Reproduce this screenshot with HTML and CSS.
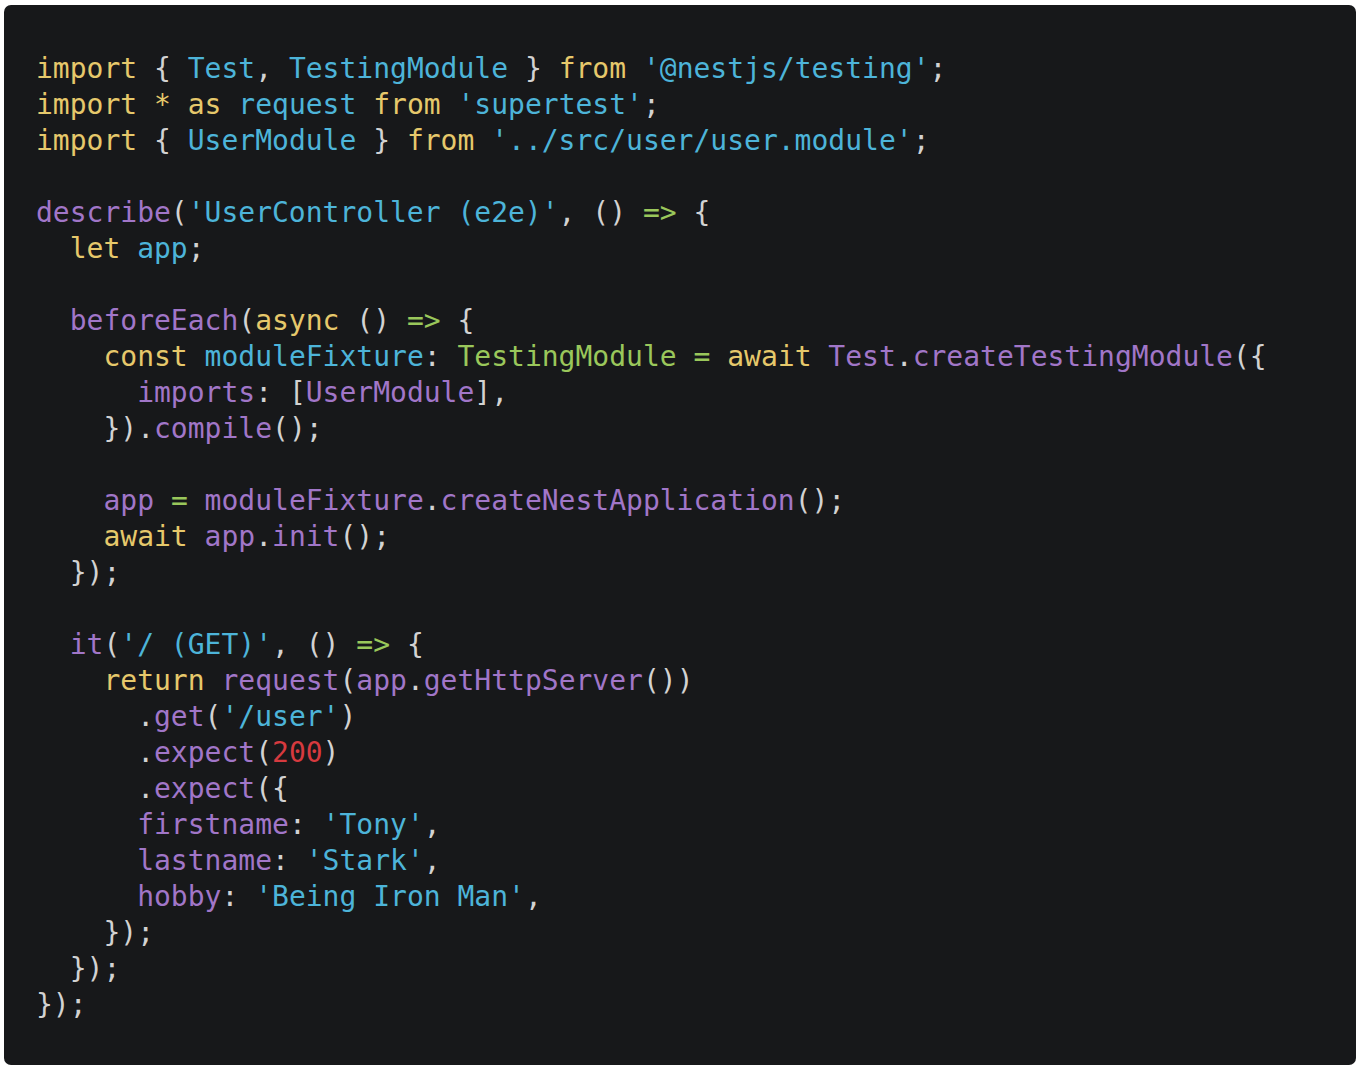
FILE: index.html
```html
<!DOCTYPE html>
<html lang="en">
<head>
<meta charset="utf-8">
<title>Code</title>
<link rel="stylesheet" href="styles.css">
</head>
<body>
<div class="code-box">
<pre class="code"><span class="k">import</span> { <span class="b">Test</span>, <span class="b">TestingModule</span> } <span class="k">from</span> <span class="b">'@nestjs/testing'</span>;
<span class="k">import</span> <span class="k">*</span> <span class="k">as</span> <span class="b">request</span> <span class="k">from</span> <span class="b">'supertest'</span>;
<span class="k">import</span> { <span class="b">UserModule</span> } <span class="k">from</span> <span class="b">'../src/user/user.module'</span>;

<span class="p">describe</span>(<span class="b">'UserController (e2e)'</span>, () <span class="g">=&gt;</span> {
  <span class="k">let</span> <span class="b">app</span>;

  <span class="p">beforeEach</span>(<span class="k">async</span> () <span class="g">=&gt;</span> {
    <span class="k">const</span> <span class="b">moduleFixture</span>: <span class="g">TestingModule</span> <span class="g">=</span> <span class="k">await</span> <span class="p">Test</span>.<span class="p">createTestingModule</span>({
      <span class="p">imports</span>: [<span class="p">UserModule</span>],
    }).<span class="p">compile</span>();

    <span class="p">app</span> <span class="g">=</span> <span class="p">moduleFixture</span>.<span class="p">createNestApplication</span>();
    <span class="k">await</span> <span class="p">app</span>.<span class="p">init</span>();
  });

  <span class="p">it</span>(<span class="b">'/ (GET)'</span>, () <span class="g">=&gt;</span> {
    <span class="k">return</span> <span class="p">request</span>(<span class="p">app</span>.<span class="p">getHttpServer</span>())
      .<span class="p">get</span>(<span class="b">'/user'</span>)
      .<span class="p">expect</span>(<span class="r">200</span>)
      .<span class="p">expect</span>({
      <span class="p">firstname</span>: <span class="b">'Tony'</span>,
      <span class="p">lastname</span>: <span class="b">'Stark'</span>,
      <span class="p">hobby</span>: <span class="b">'Being Iron Man'</span>,
    });
  });
});</pre>
</div>
</body>
</html>
```
FILE: styles.css
```css
html, body {
  margin: 0;
  padding: 0;
  background: #ffffff;
}

body {
  padding: 5px 4px;
}

.code-box {
  background: #17181a;
  border-radius: 7px;
  padding: 46px 32px 42px;
  width: 1352px;
  box-sizing: border-box;
}

.code {
  margin: 0;
  font-family: "DejaVu Sans Mono", "Liberation Mono", monospace;
  font-size: 28px;
  line-height: 36px;
  color: #d2d2d2;
  white-space: pre;
}

.k { color: #e6c86b; }
.b { color: #4db4d9; }
.p { color: #a176c8; }
.g { color: #9ac75b; }
.r { color: #d63a3f; }
```
